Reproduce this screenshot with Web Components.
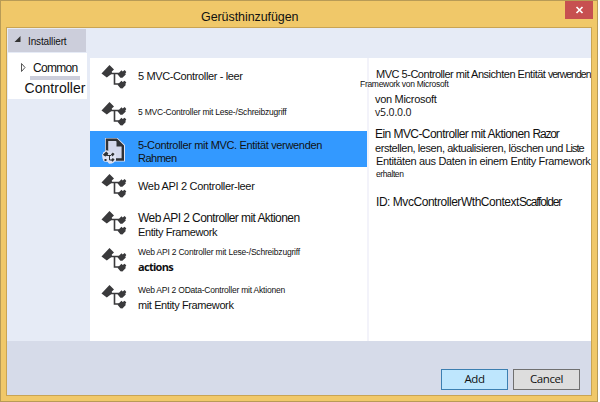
<!DOCTYPE html>
<html lang="de">
<head>
<meta charset="utf-8">
<title>Gerüst hinzufügen</title>
<style>
html,body{margin:0;background:#fff;overflow:hidden}
body{font-family:"Liberation Sans",Arial,sans-serif;color:#111}
</style>
</head>
<body>
<scaffold-dialog></scaffold-dialog>
<script>
const define = (name, html, setup) => customElements.define(name, class extends HTMLElement {
  connectedCallback() {
    if (this.shadowRoot) return;
    this.attachShadow({mode: 'open'}).innerHTML = html;
    if (setup) setup(this, this.shadowRoot);
  }
});

/* A line whose box ends at its baseline: adv = distance from the previous baseline. */
define('text-line', `<style>
:host{display:flex;flex:none;box-sizing:border-box;white-space:pre}
</style><slot></slot>`, el => {
  el.style.height = el.getAttribute('adv') + 'px';
  el.style.alignItems = 'flex-end';
  if (el.hasAttribute('x')) el.style.marginLeft = el.getAttribute('x') + 'px';
});

/* A run of text tracked to a given width. */
define('text-run', `<style>
:host{display:block;flex:none;white-space:pre}
span{display:inline-block}
</style><span><slot></slot></span>`, (el, root) => {
  const s = +el.getAttribute('s'), w = +el.getAttribute('w');
  const open = el.hasAttribute('humanist');
  el.style.fontSize = s + 'px';
  if (open) el.style.fontFamily = '"Open Sans",sans-serif';
  el.style.lineHeight = Math.round(s * (open ? .776 : .693)) + 'px';
  const n = el.textContent.length, span = root.querySelector('span');
  const natural = span.getBoundingClientRect().width;
  span.style.letterSpacing = ((w - natural) / n) + 'px';
  el.style.width = w + 'px';
});

define('controller-icon', `<style>:host{display:block;width:26px;height:26px}svg{display:block}</style>
<svg width="26" height="26" viewBox="0 0 26 26">
<g fill="#3a3a3c"><path d="M.5 9.5 8.5 1 13 5.5 10.8 7.6 11 9.5 5.8 13.5z"/>
<path d="m16.5 10.2 4-4 1.2 1.2 2-1.3 1.6 1.8-1 1.5.5 1-3.4 3.4-2-.1z"/>
<path d="m16.5 20.8 4-4 1.2 1.2 2-1.3 1.6 1.8-1 1.5.5 1-3.4 3.4-2-.1z"/></g>
<path d="M9 9.5h9M13.5 9.5v10.5h5" fill="none" stroke="#3a3a3c" stroke-width="1.6"/></svg>`);

define('page-icon', `<style>:host{display:block;width:26px;height:28px}svg{display:block}</style>
<svg width="26" height="28" viewBox="0 0 26 28">
<path d="M4 1h12.5L24 8v16.5H13l-2 2H8l-1-1.5-4-.5-1.5-3L1 17.5 4 15z" fill="#dfe2f2"/>
<path d="M6 14V2.7h9.5L21.8 9v13.5H14.5" fill="#d4d8ec" stroke="#303236" stroke-width="2.4"/>
<path d="M15.5 3v6.5H22z" fill="#303236"/>
<path d="M2 15.5 6 13l3 3 4-1.5 2 2v7l-3 2.5-4 .5-2-2.5-4-.5z" fill="#dfe2f2"/>
<g fill="#303236"><path d="m1.8 17.8 3.5-3.3 2 2-1 2-2 1z"/><path d="m9.8 17.6 2-2 1.8 1.4-2 2.4z"/><path d="m9.8 23 2-2 1.8 1.4-2 2.4z"/><path d="M3.5 22h2v2h-2z"/></g>
<path d="M6 18.5h4M8.5 18.5V23H10" fill="none" stroke="#303236"/></svg>`);

define('scaffold-item', `<style>
:host{display:grid;grid-template-columns:48px 1fr;height:var(--h,37px);flex:none;box-sizing:border-box}
:host([selected]){background:#3399ff}
.i{padding:var(--iy,6px) 0 0 11px}
</style><div class="i"><slot name="icon"><controller-icon></controller-icon></slot></div><div><slot></slot></div>`);

define('tree-panel', `<style>
:host{display:block;width:83px;background:#e6ebf6}
.head{height:23px;width:78px;background:#cccedb;margin:1px 0 0 1px;display:flex}
.body{height:46px;width:79px;background:#fff;margin:1px 0 0 1px}
.row{display:flex}
.mark{width:20px;flex:none}
.bar{height:4px;width:50px;background:#cccedb;margin:3px 0 0 22px}
svg{display:block}
</style>
<div class="head"><div class="mark"><svg width="20" height="20"><path d="M12.5 7v6H6.5z" fill="#333"/></svg></div><text-line adv="16"><text-run s="10" w="38.5">Installiert</text-run></text-line></div>
<div class="body"><div class="row"><div class="mark" style="width:25px"><svg width="24" height="20"><path d="M13.5 10.5v8l3.5-4z" fill="#fff" stroke="#555"/></svg></div><text-line adv="19"><text-run s="12" w="44.5">Common</text-run></text-line></div>
<div class="bar"></div><text-line adv="13" x="16.5"><text-run s="14" w="61">Controller</text-run></text-line></div>`);

define('scaffold-list', `<style>:host{display:flex;flex-direction:column;width:277px;background:#fff}</style>
<scaffold-item><text-line adv="22"><text-run s="11" w="104.5">5 MVC-Controller - leer</text-run></text-line></scaffold-item>
<scaffold-item style="--h:36px"><text-line adv="20"><text-run s="8.5" w="148.5">5 MVC-Controller mit Lese-/Schreibzugriff</text-run></text-line></scaffold-item>
<scaffold-item selected style="--h:36px;--iy:6px"><page-icon slot="icon"></page-icon><text-line adv="18"><text-run s="11" w="184">5-Controller mit MVC. Entität verwenden</text-run></text-line><text-line adv="13"><text-run s="11" w="38.5">Rahmen</text-run></text-line></scaffold-item>
<scaffold-item><text-line adv="23"><text-run s="11" w="116.5">Web API 2 Controller-leer</text-run></text-line></scaffold-item>
<scaffold-item><text-line adv="18"><text-run s="12" w="161.5">Web API 2 Controller mit Aktionen</text-run></text-line><text-line adv="14"><text-run s="11" w="79">Entity Framework</text-run></text-line></scaffold-item>
<scaffold-item><text-line adv="14"><text-run s="8.5" w="162">Web API 2 Controller mit Lese-/Schreibzugriff</text-run></text-line><text-line adv="16"><text-run humanist s="11" w="35" style="font-weight:700">actions</text-run></text-line></scaffold-item>
<scaffold-item><text-line adv="15"><text-run s="8.5" w="147">Web API 2 OData-Controller mit Aktionen</text-run></text-line><text-line adv="16"><text-run s="11" w="95.5">mit Entity Framework</text-run></text-line></scaffold-item>`);

define('scaffold-details', `<style>:host{display:flex;flex-direction:column;width:215px;background:#fff;border-left:2px solid #f3f3fa;padding-left:7px;box-sizing:content-box}</style>
<text-line adv="20"><text-run s="11" w="172">MVC 5-Controller mit Ansichten Entität </text-run><text-run s="10.5" w="42.5">verwenden</text-run></text-line>
<text-line adv="9" x="-16"><text-run s="8.5" w="88.5">Framework von Microsoft</text-run></text-line>
<text-line adv="16" x="-1"><text-run s="11" w="61.5">von Microsoft</text-run></text-line>
<text-line adv="13" x="-1"><text-run humanist s="10.5" w="36.5">v5.0.0.0</text-run></text-line>
<text-line adv="22" x="-1"><text-run s="12" w="157.5">Ein MVC-Controller mit Aktionen </text-run><text-run s="12" w="26">Razor</text-run></text-line>
<text-line adv="14" x="-1"><text-run s="11" w="190.5">erstellen, lesen, aktualisieren, löschen und </text-run><text-run s="11" w="18">Liste</text-run></text-line>
<text-line adv="13"><text-run s="11" w="214.5">Entitäten aus Daten in einem Entity Framework</text-run></text-line>
<text-line adv="12"><text-run s="8.5" w="27.5">erhalten</text-run></text-line>
<text-line adv="29"><text-run s="12" w="143">ID: MvcControllerWthContext</text-run><text-run s="12" w="42">Scaffolder</text-run></text-line>`);

define('dialog-button', `<style>
:host{display:flex;justify-content:center;box-sizing:border-box;width:67px;height:21px;border:1px solid #707070;background:#dddddd}
:host([primary]){border-color:#3c7fb1;background:#bee6fd}
</style><slot></slot>`);

define('title-bar', `<style>
:host{display:flex;height:26px;background:#f0c869}
.close{width:28px;height:18px;background:#c75050;margin:0 4px 0 auto}
svg{display:block}
</style><text-line adv="21" x="200"><text-run s="12.5" w="97.5">Gerüsthinzufügen</text-run></text-line>
<div class="close"><svg width="28" height="18"><path d="m11.5 6 6 6m0-6-6 6" stroke="#fff" stroke-width="1.7"/></svg></div>`);

define('scaffold-dialog', `<style>
:host{display:block;box-sizing:border-box;width:598px;height:402px;border:1px solid #b89b56;background:#f0c869}
.client{box-sizing:border-box;width:586px;height:369px;margin-left:5px;border:1px solid #c9a453;background:#e6ebf6}
.main{display:flex;height:313px;overflow:hidden}
.content{display:flex;height:283px;margin-top:30px}
footer{height:54px;background:#d6dbe9;display:flex;justify-content:flex-end;gap:5px;padding:28px 11px 0 0;box-sizing:border-box}
</style>
<title-bar></title-bar>
<div class="client"><div class="main"><tree-panel></tree-panel><div class="content"><scaffold-list></scaffold-list><scaffold-details></scaffold-details></div></div>
<footer><dialog-button primary><text-line adv="13"><text-run humanist s="11.5" w="20">Add</text-run></text-line></dialog-button><dialog-button><text-line adv="13"><text-run humanist s="11.5" w="33">Cancel</text-run></text-line></dialog-button></footer></div>`);
</script>
</body>
</html>
